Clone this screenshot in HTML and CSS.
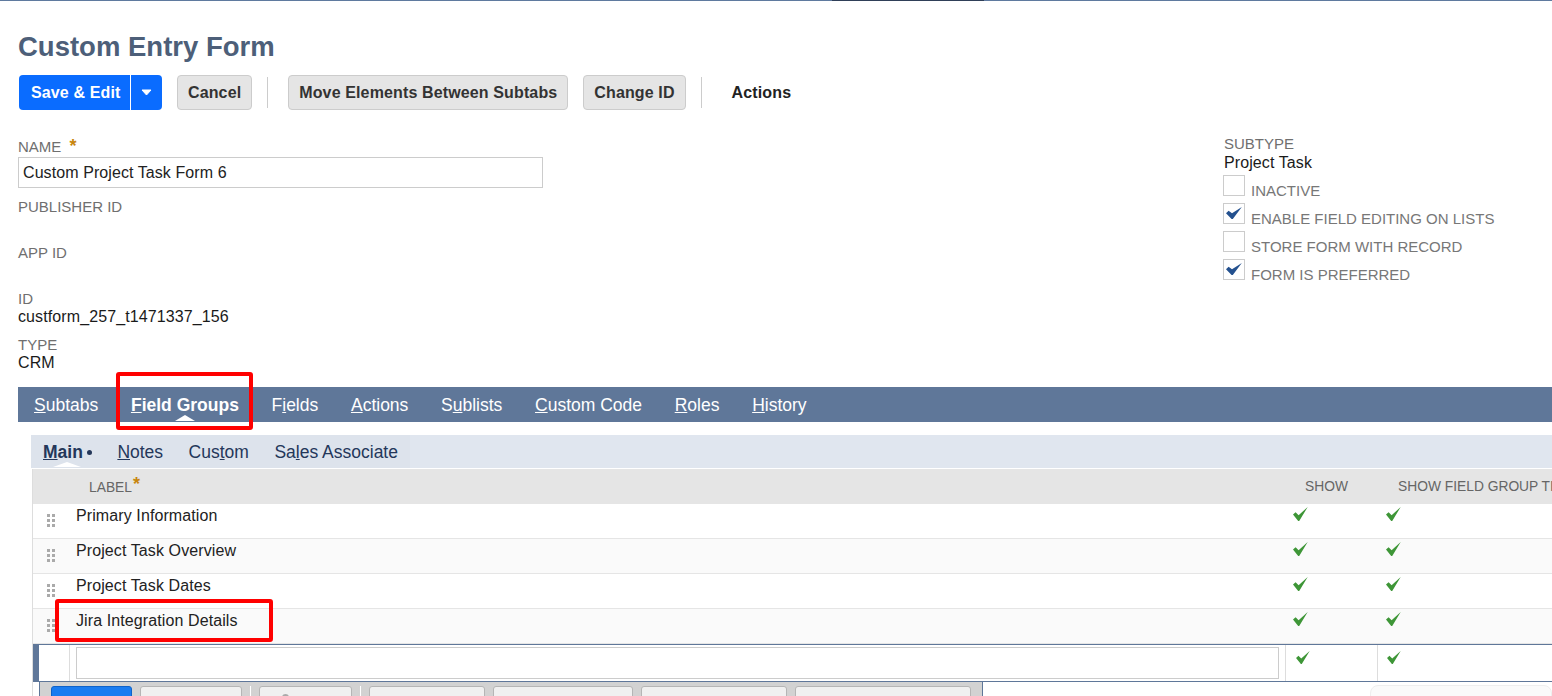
FILE: index.html
```html
<!DOCTYPE html>
<html lang="en">
<head>
<meta charset="utf-8">
<title>Custom Entry Form</title>
<link rel="stylesheet" href="styles.css">
</head>
<body>
<svg class="defs" width="0" height="0" aria-hidden="true">
  <symbol id="tick-green" viewBox="0 0 15 14"><path d="M0 7.500L2.600 5.200L5.600 8.200L14.700 0L6.200 14L5.200 14Z" fill="#3e9637"/></symbol>
  <symbol id="tick-blue" viewBox="0 0 16 12"><path d="M0 6.200L2.600 3.800L6 6.300L15.800 0L6.800 12L5.600 12Z" fill="#24518f"/></symbol>
</svg>
<div class="topline"><span class="topline-dark"></span></div>
<h1 class="title">Custom Entry Form</h1>
<div class="toolbar">
  <div class="btn-split">
    <span class="btn-primary">Save &amp; Edit</span>
    <span class="btn-caret"><svg width="11" height="7" viewBox="0 0 11 7"><path d="M1 1h9L5.500 6z" fill="#fff" stroke="#fff" stroke-linejoin="round"/></svg></span>
  </div>
  <span class="btn">Cancel</span>
  <span class="sep"></span>
  <span class="btn">Move Elements Between Subtabs</span>
  <span class="btn">Change ID</span>
  <span class="sep"></span>
  <span class="action">Actions</span>
</div>
<div class="form">
  <div class="col-left">
    <div class="lbl name-lbl">NAME <span class="req">*</span></div>
    <div class="name-input">Custom Project Task Form 6</div>
    <div class="lbl pub">PUBLISHER ID</div>
    <div class="lbl app">APP ID</div>
    <div class="lbl idl">ID</div>
    <div class="val">custform_257_t1471337_156</div>
    <div class="lbl typ">TYPE</div>
    <div class="val">CRM</div>
  </div>
  <div class="col-right">
    <div class="subtype">
      <div class="lbl">SUBTYPE</div>
      <div class="val">Project Task</div>
    </div>
    <div class="chk-row"><span class="chk"></span><span class="lbl">INACTIVE</span></div>
    <div class="chk-row"><span class="chk"><svg class="tick-b"><use href="#tick-blue"/></svg></span><span class="lbl">ENABLE FIELD EDITING ON LISTS</span></div>
    <div class="chk-row"><span class="chk"></span><span class="lbl">STORE FORM WITH RECORD</span></div>
    <div class="chk-row"><span class="chk"><svg class="tick-b"><use href="#tick-blue"/></svg></span><span class="lbl">FORM IS PREFERRED</span></div>
  </div>
</div>
<nav class="tabs">
  <span class="tab"><u>S</u>ubtabs</span>
  <span class="tab tab-on"><u>F</u>ield Groups</span>
  <span class="tab">F<u>i</u>elds</span>
  <span class="tab"><u>A</u>ctions</span>
  <span class="tab">S<u>u</u>blists</span>
  <span class="tab"><u>C</u>ustom Code</span>
  <span class="tab"><u>R</u>oles</span>
  <span class="tab"><u>H</u>istory</span>
</nav>
<div class="panel">
  <div class="subtabs">
    <div class="subtabs-in">
      <span class="sub sub-on"><u>M</u>ain<i class="dot"></i></span>
      <span class="sub"><u>N</u>otes</span>
      <span class="sub">Cus<u>t</u>om</span>
      <span class="sub">Sa<u>l</u>es Associate</span>
    </div>
  </div>
  <div class="grid">
    <div class="row head">
      <span class="c-label">LABEL<span class="req req-h">*</span></span>
      <span class="c-show">SHOW</span>
      <span class="c-title">SHOW FIELD GROUP TITLE</span>
    </div>
    <div class="row">
      <span class="grip"></span><span class="c-label">Primary Information</span>
      <span class="c-show"><svg class="tick"><use href="#tick-green"/></svg></span>
      <span class="c-title"><svg class="tick"><use href="#tick-green"/></svg></span>
    </div>
    <div class="row alt">
      <span class="grip"></span><span class="c-label">Project Task Overview</span>
      <span class="c-show"><svg class="tick"><use href="#tick-green"/></svg></span>
      <span class="c-title"><svg class="tick"><use href="#tick-green"/></svg></span>
    </div>
    <div class="row">
      <span class="grip"></span><span class="c-label">Project Task Dates</span>
      <span class="c-show"><svg class="tick"><use href="#tick-green"/></svg></span>
      <span class="c-title"><svg class="tick"><use href="#tick-green"/></svg></span>
    </div>
    <div class="row alt">
      <span class="grip"></span><span class="c-label">Jira Integration Details</span>
      <span class="c-show"><svg class="tick"><use href="#tick-green"/></svg></span>
      <span class="c-title"><svg class="tick"><use href="#tick-green"/></svg></span>
    </div>
    <div class="edit-row">
      <span class="edit-mark"></span>
      <span class="edit-cell"><span class="edit-input"></span></span>
      <span class="edit-show"><svg class="tick"><use href="#tick-green"/></svg></span>
      <span class="edit-title"><svg class="tick"><use href="#tick-green"/></svg></span>
    </div>
    <div class="bottom">
      <div class="btnbar">
        <span class="bb bb-blue"></span>
        <span class="bb w1"></span>
        <span class="bar-sep"></span>
        <span class="bb w2"></span>
        <span class="bar-sep"></span>
        <span class="bb w3"></span>
        <span class="bb w4"></span>
        <span class="bb w5"></span>
        <span class="bb w6"></span>
      </div>
      <div class="bottom-fill"><span class="pill"></span></div>
    </div>
  </div>
</div>
<span class="mark mark-tab"></span>
<span class="mark mark-row"></span>
</body>
</html>
```
FILE: styles.css
```css
* { box-sizing: border-box; }
html, body { margin: 0; padding: 0; height: 696px; overflow: hidden; background: #fff; }
body { position: relative; font-family: "Liberation Sans", Arial, sans-serif; font-size: 16px; color: #222; }
.defs { position: absolute; }

.topline { height: 1px; background: #5f7a9f; padding-left: 832px; }
.topline-dark { display: block; width: 152px; height: 1px; background: #2f3f58; }

.title { margin: 30px 0 0 18px; height: 32px; line-height: 32px; font-size: 27.500px; font-weight: 700; color: #4d5f79; }

.toolbar { display: flex; align-items: center; height: 35px; margin: 12px 0 0 19px; letter-spacing: .13px; }
.btn-split { display: flex; height: 35px; border-radius: 4px; background: #0a6cff; color: #fff; font-weight: 700; overflow: hidden; }
.btn-primary { padding: 0 10px 0 12px; line-height: 35px; border-right: 1px solid #fff; width: 112px; white-space: nowrap; }
.btn-caret { width: 31px; display: flex; align-items: center; justify-content: center; }
.btn { height: 35px; line-height: 33px; padding: 0 10px; margin-left: 15px; background: #e5e5e5; border: 1px solid #ccc; border-radius: 4px; font-weight: 700; color: #333; white-space: nowrap; }
.sep { width: 1px; height: 31px; background: #ccc; margin-left: 15px; margin-right: 5px; }
.action { margin-left: 25px; font-weight: 700; color: #222; }

.form { display: flex; justify-content: space-between; height: 277px; }
.col-left { margin-left: 18px; padding-top: 28px; width: 525px; }
.col-right { width: 329px; padding-top: 26px; }
.subtype { padding-left: 1px; margin-bottom: 2px; }
.subtype .val { margin-top: 2px; }
.lbl { font-size: 15px; line-height: 16px; color: #6f6f6f; white-space: nowrap; }
.val { font-size: 16px; line-height: 18px; margin-top: 1px; color: #1a1a1a; white-space: nowrap; letter-spacing: .1px; }
.req { color: #c8860d; font-size: 18px; font-weight: 700; margin-left: 4px; }
.name-lbl { height: 19px; }
.name-input { height: 31px; border: 1px solid #ccc; padding-left: 4px; line-height: 29px; font-size: 16px; color: #222; letter-spacing: .08px; }
.pub { margin-top: 11px; }
.app { margin-top: 30px; }
.idl { margin-top: 30px; }
.typ { margin-top: 11px; }
.chk-row { display: flex; height: 28px; }
.chk { width: 22px; height: 21px; margin-top: 1px; border: 1px solid #ccc; margin-right: 6px; flex: none; display: flex; align-items: center; justify-content: center; }
.tick-b { display: block; width: 16px; height: 12px; margin-bottom: 2px; }
.chk-row .lbl { padding-top: 9px; color: #777; }

.tabs { display: flex; margin-left: 18px; height: 35px; background: #5f7799; color: #fff; padding-left: 16px; line-height: 36px; }
.tab { font-size: 17.500px; margin-right: 32.700px; position: relative; white-space: nowrap; }
.tab-on { font-weight: 700; }
.tab-on::after { content: ""; position: absolute; left: 50%; bottom: 1px; margin-left: -10px; border: solid transparent; border-width: 0 10px 6px; border-bottom-color: #fff; }

.panel { margin: 13px 0 0 31px; }
.subtabs { height: 33px; background: #e0e6ef; }
.subtabs-in { display: flex; width: 379px; height: 33px; background: #dde3ec; padding-left: 12px; line-height: 34px; }
.sub { position: relative; font-size: 17.500px; margin-right: 25.500px; color: #24375a; white-space: nowrap; }
.sub-on { font-weight: 700; margin-right: 25.500px; }
.sub-on::after { content: ""; position: absolute; left: 50%; bottom: 1px; margin-left: -14px; border: solid transparent; border-width: 0 14px 5px; border-bottom-color: #fff; }
.dot { display: inline-block; width: 5px; height: 5px; border-radius: 50%; background: #24375a; margin-left: 4px; vertical-align: 3px; }

.grid { margin-left: 1px; margin-top: 1px; border-left: 1px solid #ddd; }
.row { display: flex; height: 35px; border-bottom: 1px solid #e5e5e5; position: relative; }
.alt { background: #fafafa; }
.head { background: #e5e5e5; border-bottom: 0; font-size: 13.800px; color: #666; align-items: center; line-height: 36px; }
.grip { position: absolute; left: 14px; top: 10px; width: 3px; height: 3px; background: #aaa; box-shadow: 5px 0 #aaa, 0 5px #aaa, 5px 5px #aaa, 0 10px #aaa, 5px 10px #aaa; }
.c-label { width: 1260px; padding-left: 43px; flex: none; font-size: 16px; line-height: 23px; white-space: nowrap; letter-spacing: .1px; }
.head .c-label { padding-left: 56px; font-size: 13.800px; line-height: 35px; letter-spacing: 0; }
.req-h { margin-left: 1px; position: relative; top: -2px; }
.c-show { width: 93px; flex: none; line-height: 34px; }
.head .c-show { padding-left: 12px; line-height: 36px; }
.head .c-title { padding-left: 12px; white-space: nowrap; }
.tick { display: block; width: 15px; height: 14px; margin-top: 3px; }

.edit-row { display: flex; height: 38px; border-top: 1px solid #5f7799; border-bottom: 1px solid #5f7799; }
.edit-mark { width: 37px; flex: none; border-left: 6px solid #5f7799; border-right: 1px solid #ddd; }
.edit-cell { width: 1216px; flex: none; padding: 2px 0 0 6px; border-right: 1px solid #ddd; }
.edit-input { display: block; width: 1203px; height: 32px; border: 1px solid #ccc; }
.edit-show { width: 92px; flex: none; border-right: 1px solid #ddd; padding-left: 10px; }
.edit-title { flex: 1; padding-left: 9px; }
.edit-row .tick { margin-top: 6px; width: 14px; height: 13px; }

.bottom { display: flex; height: 14px; }
.btnbar { display: flex; width: 944px; flex: none; margin-left: 6px; padding: 4px 0 0 11px; background: #d2d2d2; border-left: 1px solid #5f7799; border-right: 1px solid #5f7799; gap: 8px; overflow: hidden; }
.bb { height: 30px; border: 1px solid #b5b5b5; border-radius: 3px; background: #f0f0f0; flex: none; }
.bb-blue { width: 81px; background: #1a7cf0; border-color: #0f62c8; }
.w1 { width: 102px; }
.w2 { width: 93px; padding-left: 22px; }
.w2::before { content: ""; display: block; width: 7px; height: 7px; margin-top: 7px; border-radius: 50%; background: #aaa; }
.w3 { width: 116px; }
.w4 { width: 140px; }
.w5 { width: 146px; }
.w6 { width: 176px; }
.bar-sep { width: 1px; flex: none; background: #fff; }
.bottom-fill { flex: 1; padding: 3px 0 0 387px; }
.pill { display: block; height: 30px; background: #fafafa; border: 1px solid #eee; border-radius: 8px; }

.mark { position: absolute; border: 4px solid #f00; border-radius: 3px; }
.mark-tab { left: 116px; top: 372px; width: 137px; height: 58px; }
.mark-row { left: 55px; top: 599px; width: 218px; height: 43px; }
```
